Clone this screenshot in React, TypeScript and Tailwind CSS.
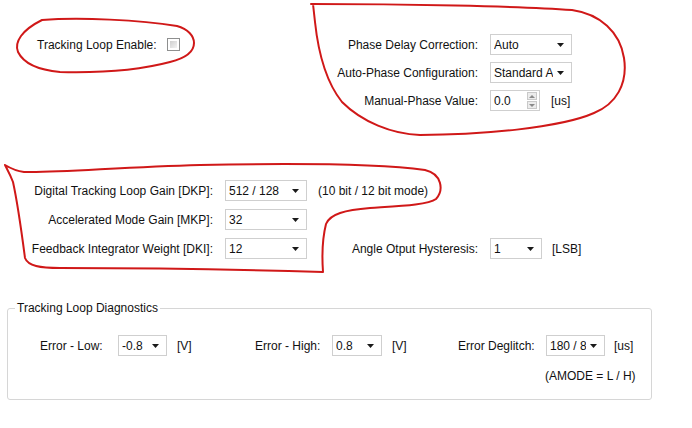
import React from "react";

type SelectProps = { value: string; width: string };

function Select({ value, width }: SelectProps) {
  return (
    <div
      className={`${width} h-[21px] flex items-center border border-[#cfcfcf] bg-white pl-[3px] pr-[7px] whitespace-nowrap`}
    >
      <span className="flex-1 min-w-0 overflow-hidden">{value}</span>
      <svg width="7" height="4" viewBox="0 0 7 4" className="shrink-0 ml-[4px]">
        <path d="M0 0 L7 0 L3.5 4 Z" fill="#1a1a1a" />
      </svg>
    </div>
  );
}

function Spinner({ value }: { value: string }) {
  return (
    <div className="w-[50px] h-[21px] flex items-center justify-between border border-[#cfcfcf] bg-white pl-[3px] pr-[2px]">
      <span>{value}</span>
      <div className="flex flex-col gap-[1px]">
        <div className="w-[10px] h-[8px] flex items-center justify-center border border-[#c9c9c9] bg-[#ececec]">
          <svg width="6" height="3" viewBox="0 0 6 3">
            <path d="M0 3 L6 3 L3 0 Z" fill="#8a8a8a" />
          </svg>
        </div>
        <div className="w-[10px] h-[8px] flex items-center justify-center border border-[#c9c9c9] bg-[#ececec]">
          <svg width="6" height="3" viewBox="0 0 6 3">
            <path d="M0 0 L6 0 L3 3 Z" fill="#8a8a8a" />
          </svg>
        </div>
      </div>
    </div>
  );
}

function Checkbox() {
  return (
    <div className="w-[13px] h-[13px] border border-[#8e8f8f] bg-white p-[2px]">
      <div className="w-full h-full bg-gradient-to-br from-[#cfcfcf] to-[#f3f3f3]" />
    </div>
  );
}

export default function App() {
  return (
    <div
      className="relative w-[692px] h-[428px] bg-white overflow-hidden text-[12px] leading-[14px] text-[#111]"
      style={{ fontFamily: '"Liberation Sans", Arial, sans-serif' }}
    >
      {/* top section */}
      <div className="flex pt-[34px]">
        <div className="w-[328px] pl-[37px] h-[21px] flex items-center">
          <span>Tracking Loop Enable:</span>
          <div className="ml-[10px]">
            <Checkbox />
          </div>
        </div>
        <div className="grid grid-cols-[150px_auto] gap-x-[12px] gap-y-[7px] items-center">
          <span className="text-right">Phase Delay Correction:</span>
          <Select value="Auto" width="w-[82px]" />
          <span className="text-right">Auto-Phase Configuration:</span>
          <Select value="Standard Auto" width="w-[82px]" />
          <span className="text-right">Manual-Phase Value:</span>
          <div className="flex items-center">
            <Spinner value="0.0" />
            <span className="ml-[11px]">[us]</span>
          </div>
        </div>
      </div>

      {/* gains */}
      <div className="mt-[69px] flex flex-col gap-[8px]">
        <div className="flex items-center h-[21px]">
          <span className="w-[213px] text-right">Digital Tracking Loop Gain [DKP]:</span>
          <div className="ml-[12px]">
            <Select value="512 / 128" width="w-[82px]" />
          </div>
          <span className="ml-[11px]">(10 bit / 12 bit mode)</span>
        </div>
        <div className="flex items-center h-[21px]">
          <span className="w-[213px] text-right">Accelerated Mode Gain [MKP]:</span>
          <div className="ml-[12px]">
            <Select value="32" width="w-[82px]" />
          </div>
        </div>
        <div className="flex items-center h-[21px]">
          <span className="w-[213px] text-right">Feedback Integrator Weight [DKI]:</span>
          <div className="ml-[12px]">
            <Select value="12" width="w-[82px]" />
          </div>
          <span className="w-[171px] text-right">Angle Otput Hysteresis:</span>
          <div className="ml-[12px]">
            <Select value="1" width="w-[52px]" />
          </div>
          <span className="ml-[10px]">[LSB]</span>
        </div>
      </div>

      {/* diagnostics */}
      <fieldset className="mt-[42px] ml-[7px] w-[645px] h-[99px] border border-[#d6d6d6] rounded-[3px]">
        <legend className="ml-[7px] px-[2px]">Tracking Loop Diagnostics</legend>
        <div className="mt-[20px] pl-[32px] flex items-center h-[21px]">
          <div className="w-[215px] flex items-center">
            <span className="w-[78px]">Error - Low:</span>
            <Select value="-0.8" width="w-[49px]" />
            <span className="ml-[10px]">[V]</span>
          </div>
          <div className="w-[203px] flex items-center">
            <span className="w-[77px]">Error - High:</span>
            <Select value="0.8" width="w-[50px]" />
            <span className="ml-[10px]">[V]</span>
          </div>
          <div className="flex items-center">
            <span className="w-[88px]">Error Deglitch:</span>
            <Select value="180 / 8" width="w-[59px]" />
            <span className="ml-[9px]">[us]</span>
          </div>
        </div>
        <div className="mt-[13px] pl-[537px]">(AMODE = L / H)</div>
      </fieldset>

      {/* hand-drawn annotations */}
      <svg
        className="absolute inset-0 pointer-events-none"
        width="692"
        height="428"
        viewBox="0 0 692 428"
        fill="none"
        stroke="#d01818"
        strokeWidth="2"
        strokeLinecap="round"
        strokeLinejoin="round"
      >
        <path d="M42 20 C 80 17, 140 20, 177 26 C 188 29, 194 36, 194 43 C 194 52, 186 58, 170 62 C 140 70, 100 73, 60 72 C 38 70, 24 64, 18 52 C 14 42, 22 30, 42 20" />
        <path d="M311 4 C 400 4, 520 6, 572 10 C 600 14, 620 32, 624 58 C 628 84, 616 104, 594 113 C 560 128, 480 135, 420 135 C 392 134, 362 122, 342 102 C 326 82, 318 50, 315 22 L 313 4" />
        <path d="M5 165 C 10 168, 16 171, 24 172 C 60 173, 120 167, 200 165 C 300 163, 380 164, 425 170 C 442 174, 444 190, 436 199 C 428 205, 400 206, 370 208 C 345 210, 330 214, 326 224 C 322 240, 322 258, 323 272 C 260 270, 150 268, 60 268 C 40 268, 28 266, 25 258 C 22 235, 18 205, 13 182 C 10 174, 7 169, 5 165" />
      </svg>
    </div>
  );
}
